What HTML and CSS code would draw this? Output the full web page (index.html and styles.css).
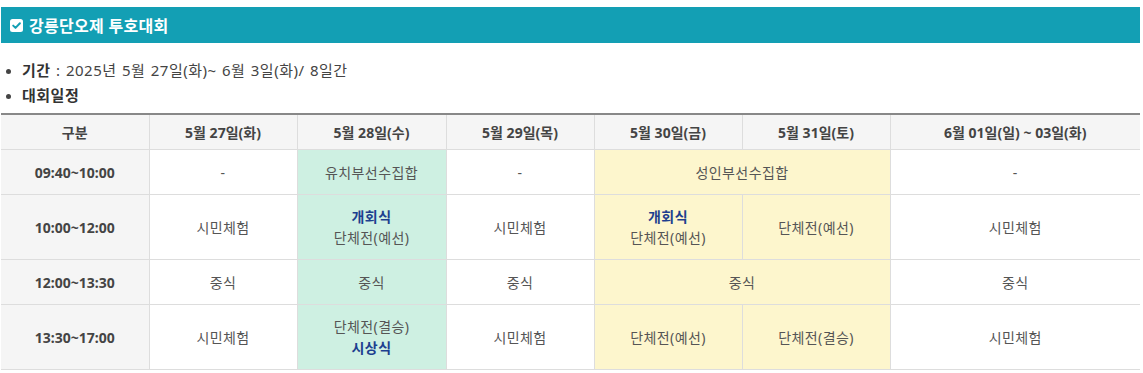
FILE: index.html
```html
<!DOCTYPE html>
<html lang="ko">
<head>
<meta charset="utf-8">
<link rel="stylesheet" href="styles.css">
</head>
<body>
<div class="page">
  <h2 class="title">
    <svg class="chk" width="13" height="13" viewBox="0 0 13 13"><rect x="0" y="0" width="13" height="13" rx="2.5" fill="#fff"/><path d="M3.2 6.6 L5.5 8.9 L9.9 4.3" stroke="#139fb4" stroke-width="2" fill="none" stroke-linecap="round" stroke-linejoin="round"/></svg>
    <span>강릉단오제 투호대회</span>
  </h2>
  <ul class="info">
    <li><b>기간</b> : 2025년 5월 27일(화)~ 6월 3일(화)/ 8일간</li>
    <li><b>대회일정</b></li>
  </ul>
  <table class="sched">
    <colgroup>
      <col class="c1"><col class="c2"><col class="c3"><col class="c4"><col class="c5"><col class="c6"><col class="c7">
    </colgroup>
    <thead>
      <tr>
        <th>구분</th><th>5월 27일(화)</th><th>5월 28일(수)</th><th>5월 29일(목)</th><th>5월 30일(금)</th><th>5월 31일(토)</th><th>6월 01일(일) ~ 03일(화)</th>
      </tr>
    </thead>
    <tbody>
      <tr class="r1">
        <th>09:40~10:00</th><td>-</td><td class="g">유치부선수집합</td><td>-</td><td class="y" colspan="2">성인부선수집합</td><td>-</td>
      </tr>
      <tr class="r2">
        <th>10:00~12:00</th><td>시민체험</td><td class="g"><strong>개회식</strong><br>단체전(예선)</td><td>시민체험</td><td class="y"><strong>개회식</strong><br>단체전(예선)</td><td class="y">단체전(예선)</td><td>시민체험</td>
      </tr>
      <tr class="r1">
        <th>12:00~13:30</th><td>중식</td><td class="g">중식</td><td>중식</td><td class="y" colspan="2">중식</td><td>중식</td>
      </tr>
      <tr class="r2">
        <th>13:30~17:00</th><td>시민체험</td><td class="g">단체전(결승)<br><strong>시상식</strong></td><td>시민체험</td><td class="y">단체전(예선)</td><td class="y">단체전(결승)</td><td>시민체험</td>
      </tr>
    </tbody>
  </table>
</div>
</body>
</html>
```

FILE: styles.css
```css
html, body {
  margin: 0;
  padding: 0;
  background: #fff;
}
body {
  font-family: "Noto Sans", "Noto Sans CJK KR", sans-serif;
  color: #444;
}
.page {
  padding: 7px 3px 0 1px;
}
.title {
  margin: 0;
  height: 36px;
  background: #139fb4;
  color: #fff;
  font-size: 16px;
  font-weight: 700;
  display: flex;
  align-items: center;
  gap: 6px;
  padding-left: 9px;
  letter-spacing: 0.3px;
}
.chk {
  display: block;
}
.info {
  margin: 0;
  padding: 15px 0 0 21px;
  list-style: none;
  font-size: 15px;
  color: #444;
  line-height: 25px;
  letter-spacing: 0.5px;
  word-spacing: 1px;
}
.info li {
  position: relative;
}
.info li::before {
  content: "";
  position: absolute;
  left: -16px;
  top: 11px;
  width: 5px;
  height: 5px;
  border-radius: 50%;
  background: #444;
}
.info b {
  color: #333;
}
.sched {
  margin-top: 5px;
  width: 1139px;
  border-collapse: collapse;
  table-layout: fixed;
  border-top: 2px solid #888;
  border-bottom: 1px solid #ddd;
  font-size: 14px;
  text-align: center;
}
.c1, .c2, .c4, .c5, .c6 { width: 148px; }
.c3 { width: 149px; }
.c7 { width: 250px; }
.sched th, .sched td {
  border: 1px solid #ddd;
  padding: 0 4px;
  line-height: 21px;
}
.sched tr > :first-child { border-left: none; }
.sched tr > :last-child { border-right: none; }
.sched thead th {
  height: 34px;
  background: #f5f5f5;
  color: #444;
  font-weight: 700;
  border-top: none;
}
.sched tbody th {
  background: #f5f5f5;
  color: #444;
  font-weight: 700;
}
.sched td {
  color: #555;
  letter-spacing: 0.4px;
}
.r1 > * { height: 44px; }
.r2 > * { height: 64px; }
.g { background: #cef0e2; }
.y { background: #fdf6cd; }
.sched strong {
  color: #1d3f8f;
  font-weight: 700;
}
```
